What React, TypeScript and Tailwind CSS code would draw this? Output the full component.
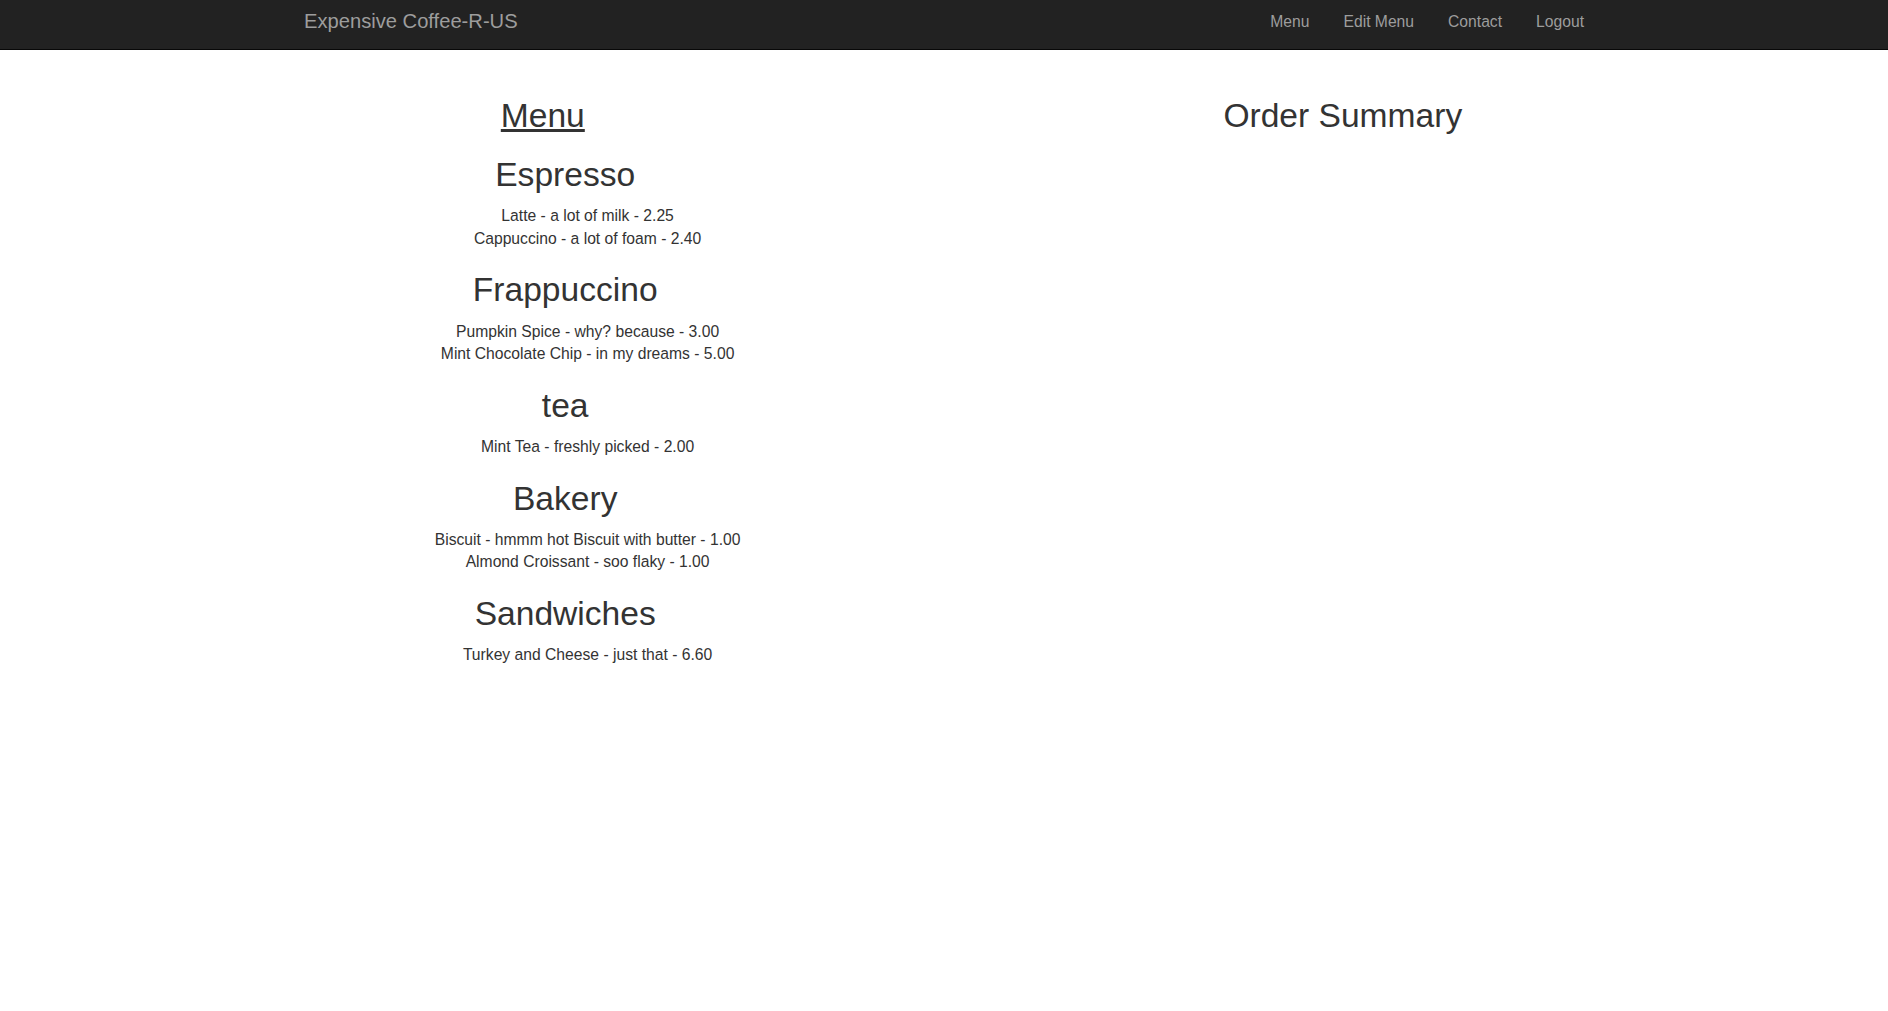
import React from 'react';

const menu = [
  {
    name: 'Espresso',
    items: ['Latte - a lot of milk - 2.25', 'Cappuccino - a lot of foam - 2.40'],
  },
  {
    name: 'Frappuccino',
    items: ['Pumpkin Spice - why? because - 3.00', 'Mint Chocolate Chip - in my dreams - 5.00'],
  },
  {
    name: 'tea',
    items: ['Mint Tea - freshly picked - 2.00'],
  },
  {
    name: 'Bakery',
    items: ['Biscuit - hmmm hot Biscuit with butter - 1.00', 'Almond Croissant - soo flaky - 1.00'],
  },
  {
    name: 'Sandwiches',
    items: ['Turkey and Cheese - just that - 6.60'],
  },
];

const navLinks = ['Menu', 'Edit Menu', 'Contact', 'Logout'];

const Navbar = () => {
  return (
    <nav className="h-[50px] bg-[#222] border-b border-[#080808]">
      <div className="mx-auto w-[1310px] h-full flex items-start justify-between px-[15px]">
        <a className="pt-[10px] text-[20.16px] leading-[22.4px] text-[#9d9d9d]">
          Expensive Coffee-R-US
        </a>
        <ul className="flex">
          {navLinks.map((link, i) => (
            <li key={link}>
              <a
                className={`block pt-[11px] leading-[22.4px] text-[15.68px] text-[#9d9d9d] ${
                  i === navLinks.length - 1 ? 'pl-[17px]' : 'px-[17px]'
                }`}
              >
                {link}
              </a>
            </li>
          ))}
        </ul>
      </div>
    </nav>
  );
};

const MenuList = () => {
  return (
    <div className="w-1/2 text-center">
      <h2 className="text-[33.6px] leading-[1.1] mb-[11.2px] underline">Menu</h2>
      <ul className="pl-[44.8px]">
        {menu.map((cat) => (
          <li key={cat.name}>
            <h2 className="text-[33.6px] leading-[1.1] mt-[22.4px] mb-[11.2px]">{cat.name}</h2>
            <ul className="pl-[44.8px] mb-[11.2px]">
              {cat.items.map((item) => (
                <li key={item} className="text-[15.68px] leading-[22.4px]">
                  {item}
                </li>
              ))}
            </ul>
          </li>
        ))}
      </ul>
    </div>
  );
};

const OrderSummary = () => {
  return (
    <div className="w-1/2 text-center">
      <h2 className="text-[33.6px] leading-[1.1]">Order Summary</h2>
    </div>
  );
};

export default function App() {
  return (
    <div className="min-h-screen bg-white text-[#333] font-['Liberation_Sans',Arial,Helvetica,sans-serif]">
      <Navbar />
      <div className="pr-[2.4px]">
        <main className="mx-auto max-w-[1600px] flex pt-[47.7px]">
          <MenuList />
          <OrderSummary />
        </main>
      </div>
    </div>
  );
}
